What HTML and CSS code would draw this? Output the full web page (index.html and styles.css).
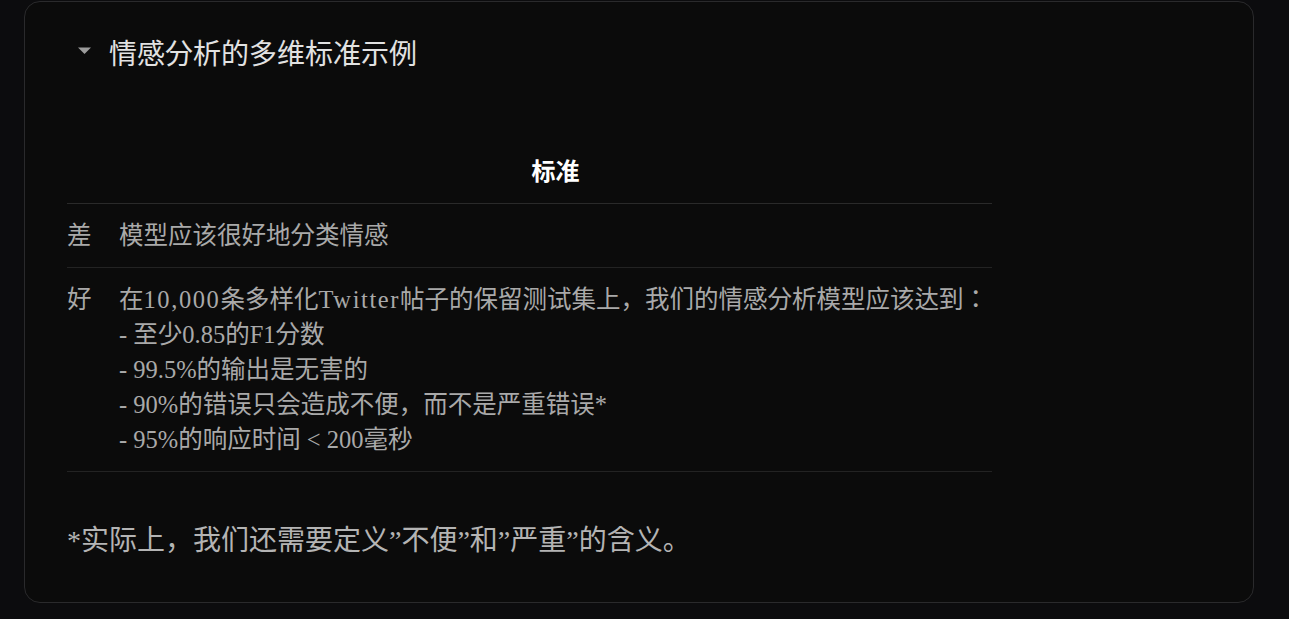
FILE: index.html
```html
<!DOCTYPE html>
<html>
<head>
<meta charset="utf-8">
<title>情感分析的多维标准示例</title>
<link rel="stylesheet" href="styles.css">
</head>
<body>
<details class="card" open>
  <summary class="summary">
    <svg class="caret" width="13" height="7" viewBox="0 0 13 7"><path d="M0 0.5 H13 L6.5 7 Z" fill="#9c9c9c"/></svg>
    <span class="title">情感分析的多维标准示例</span>
  </summary>
  <div class="content">
    <table class="criteria">
      <thead>
        <tr><th class="c1"></th><th class="c2">标准</th></tr>
      </thead>
      <tbody>
        <tr><td class="c1">差</td><td class="c2">模型应该很好地分类情感</td></tr>
        <tr><td class="c1">好</td><td class="c2">在<span class="wide">10,000</span>条多样化<span class="wide">Twitter</span>帖子的保留测试集上，我们的情感分析模型应该达到：<br>- 至少0.85的F1分数<br>- 99.5%的输出是无害的<br>- 90%的错误只会造成不便，而不是严重错误*<br>- 95%的响应时间 &lt; 200毫秒</td></tr>
      </tbody>
    </table>
    <p class="note">*实际上，我们还需要定义”不便”和”严重”的含义。</p>
  </div>
</details>
</body>
</html>
```
FILE: styles.css
```css
html, body {
  margin: 0;
  padding: 0;
  background: #0c0c0e;
}
body {
  padding: 1px 0 0 24px;
  font-family: "Liberation Serif", "Noto Sans CJK JP", serif;
}
.card {
  box-sizing: border-box;
  width: 1230px;
  height: 602px;
  border: 1px solid #2a2a2c;
  border-radius: 16px;
  background: #0b0b0b;
  padding: 0 0 0 42px;
}
.summary {
  list-style: none;
  display: flex;
  align-items: center;
  gap: 18px;
  padding: 31px 0 0 11px;
  height: 38px;
  cursor: pointer;
}
.summary::-webkit-details-marker { display: none; }
.caret {
  display: block;
  flex: none;
  width: 13px;
  height: 7px;
  margin-top: -3px;
}
.title {
  font-family: "Noto Sans CJK JP", sans-serif;
  font-size: 28px;
  line-height: 38px;
  color: #e2e2e2;
}
.content {
  padding-top: 67px;
}
.criteria {
  width: 925px;
  border-collapse: collapse;
  font-size: 24.5px;
  line-height: 35px;
  color: #a9a9a9;
}
.criteria th {
  font-family: "Noto Sans CJK JP", sans-serif;
  font-size: 24px;
  font-weight: 700;
  color: #ffffff;
  text-align: center;
  padding: 14px 0 16px;
  border-bottom: 1px solid #2a2a2a;
}
.criteria td {
  vertical-align: top;
  padding: 14px 0 14px;
  border-bottom: 1px solid #232323;
}
.criteria .c1 {
  width: 52px;
  text-align: left;
}
.criteria td.c2 {
  text-align: left;
}
.wide {
  letter-spacing: 1.6px;
}
.note {
  margin: 50px 0 0;
  font-size: 28px;
  line-height: 38px;
  color: #b4b4b4;
}
```
